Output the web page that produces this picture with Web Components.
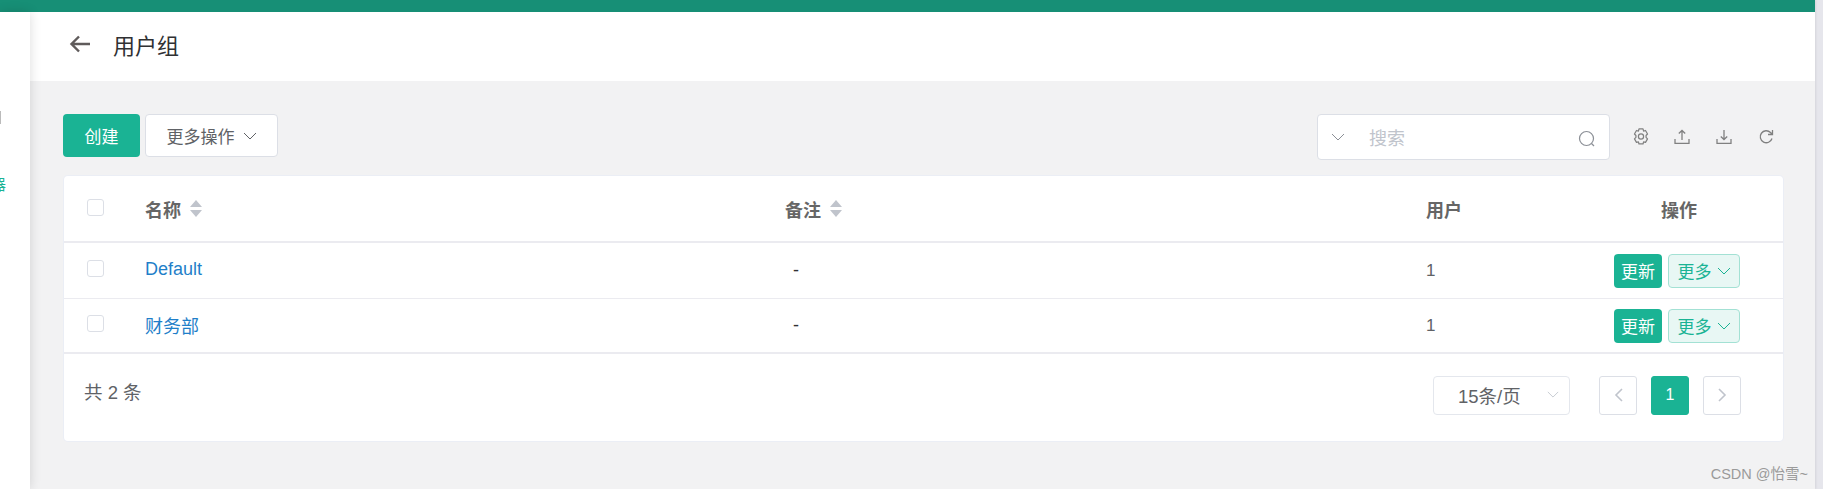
<!DOCTYPE html>
<html lang="zh">
<head>
<meta charset="utf-8">
<title>用户组</title>
<style>
  html, body { margin: 0; height: 100%; overflow: hidden; }
  body { font-family: "Liberation Sans", "Noto Sans CJK SC", sans-serif; font-size: 17px; color: #606266; }
</style>
</head>
<body>
<ug-shell>
  <ug-header title-text="用户组"></ug-header>
  <ug-toolbar></ug-toolbar>
  <ug-table>
    <ug-row name="Default" note="-" users="1"></ug-row>
    <ug-row name="财务部" note="-" users="1"></ug-row>
    <ug-pager slot="footer" total="2"></ug-pager>
  </ug-table>
</ug-shell>

<script>
(function() {
  const chevron = `<svg width="14" height="8" viewBox="0 0 14 8" fill="none" stroke="currentColor" stroke-width="1"><path d="M1 1l6 6 6-6"/></svg>`;

  // outer frame: green bar, clipped side menu, content column, scrollbar strip
  class UgShell extends HTMLElement {
    constructor() {
      super();
      this.attachShadow({ mode: "open" }).innerHTML = `
        <style>
          :host { display: flex; height: 489px; background: #e6e6ec; position: relative; }
          .page { flex: 1; min-width: 0; display: flex; flex-direction: column; background: #f2f2f3; margin-right: 8px; box-shadow: 1px 0 2px rgba(0,0,0,.08); }
          .bar { height: 12px; flex: none; background: #178f76; }
          .main { flex: 1; display: flex; min-height: 0; }
          .side { width: 30px; flex: none; background: #fff; box-shadow: 0 0 12px rgba(0,0,0,.14); z-index: 1; overflow: hidden; padding-top: 97px; box-sizing: border-box; }
          .tick { width: 1px; height: 13px; background: #bbb; margin-top: 2px; }
          .glyph { display: block; margin: 53px 0 0 -9px; color: #1ab394; font-size: 15px; line-height: 16px; }
          .content { flex: 1; min-width: 0; display: flex; flex-direction: column; }
          .mark { position: absolute; right: 15px; bottom: 6px; font-size: 14.500px; line-height: 18px; color: #9a9a9a; }
        </style>
        <div class="page">
          <div class="bar"></div>
          <div class="main">
            <div class="side"><div class="tick"></div><span class="glyph">器</span></div>
            <div class="content"><slot></slot></div>
          </div>
        </div>
        <div class="mark">CSDN @怡雪~</div>
      `;
    }
  }

  class UgHeader extends HTMLElement {
    constructor() {
      super();
      this.attachShadow({ mode: "open" }).innerHTML = `
        <style>
          :host { display: flex; align-items: center; height: 69px; flex: none; background: #fff; padding: 0 0 5px 39px; box-sizing: border-box; }
          svg { margin-right: 22px; }
          span { font-size: 22px; color: #303133; }
        </style>
        <svg width="22" height="18" viewBox="0 0 22 18" fill="none" stroke="#5f5b5b" stroke-width="2.400"><path d="M21 9H2.500M10 1.500L2.500 9l7.500 7.500"/></svg>
        <span></span>
      `;
    }
    connectedCallback() {
      this.shadowRoot.querySelector("span").textContent = this.getAttribute("title-text");
    }
  }

  class UgToolbar extends HTMLElement {
    constructor() {
      super();
      this.attachShadow({ mode: "open" }).innerHTML = `
        <style>
          :host { display: flex; align-items: flex-start; flex: none; padding: 33px 41px 0 33px; height: 95px; box-sizing: border-box; }
          button { font: inherit; font-size: 17px; height: 43px; border-radius: 4px; box-sizing: border-box; padding: 0; }
          .create { width: 77px; background: #1ab394; border: 0; color: #fff; }
          .more { width: 133px; margin-left: 5px; background: #fff; border: 1px solid #dcdfe6; color: #606266; display: flex; align-items: center; justify-content: center; gap: 8px; }
          .search { margin-left: auto; width: 293px; height: 46px; box-sizing: border-box; background: #fff; border: 1px solid #dcdfe6; border-radius: 4px; display: flex; align-items: center; padding: 0 13px 0 13px; color: #8b8f96; }
          .search span { font-size: 18px; color: #c0c4cc; margin-left: 24px; flex: 1; }
          .search .lens { margin-top: 3px; }
          .tools { display: flex; gap: 26px; margin-left: 22px; margin-top: 14px; color: #808080; align-items: center; }
          .tools svg { display: block; }
          .tools .gear { margin-right: -2px; }
        </style>
        <button class="create">创建</button>
        <button class="more">更多操作 ${chevron}</button>
        <div class="search">
          ${chevron}
          <span>搜索</span>
          <svg class="lens" width="18" height="18" viewBox="0 0 18 18" fill="none" stroke="currentColor" stroke-width="1.200"><circle cx="8.500" cy="8.500" r="7"/><path d="M13.500 13.500L16 16"/></svg>
        </div>
        <div class="tools">
          <svg class="gear" width="18" height="18" viewBox="0 0 16 16" fill="none" stroke="currentColor" stroke-width="1.100" stroke-linejoin="round"><path d="M6.200.8h3.600l.5 1.900 1.700-.5 1.800 3.100-1.300 1.400v1.600l1.300 1.400-1.800 3.100-1.700-.5-.5 1.900H6.200l-.5-1.900-1.700.5-1.800-3.100 1.300-1.400V6.700L2.200 5.300 4 2.200l1.700.5z"/><circle cx="8" cy="7.500" r="2.300"/></svg>
          <svg width="16" height="16" viewBox="0 0 16 16" fill="none" stroke="currentColor" stroke-width="1.300"><path d="M1 10v4.300h14V10M8 11V1.500M4.800 4.500L8 1.500l3.200 3"/></svg>
          <svg width="16" height="16" viewBox="0 0 16 16" fill="none" stroke="currentColor" stroke-width="1.300"><path d="M1 10v4.300h14V10M8 1v9.500M4.800 7.500L8 10.500l3.200-3"/></svg>
          <svg width="16" height="16" viewBox="0 0 16 16" fill="none" stroke="currentColor" stroke-width="1.300"><path d="M14 9.500A6 6 0 1 1 12.500 3.500L14.500 5.500M14.500 1v4.500H10"/></svg>
        </div>
      `;
    }
  }

  const rowStyle = `
    .grid { display: grid; grid-template-columns: 81px 640px 641px 156px 194px 1fr; align-items: center; }
    .box { width: 17px; height: 17px; margin-left: 23px; box-sizing: border-box; border: 1px solid #dcdfe6; border-radius: 3px; background: #fff; }
  `;

  class UgTable extends HTMLElement {
    constructor() {
      super();
      this.attachShadow({ mode: "open" }).innerHTML = `
        <style>
          :host { display: block; margin: 0 32px 0 34px; background: #fff; border-radius: 4px; box-shadow: 0 0 0 1px #ebeef5; height: 265px; }
          ${rowStyle}
          .head { height: 65px; border-bottom: 2px solid #ebebf0; color: #666; font-weight: bold; font-size: 18px; }
          .head .box { margin-top: -3px; }
          .title { display: flex; align-items: center; gap: 9px; }
          .sort { display: flex; flex-direction: column; gap: 3px; }
          .sort i { display: block; width: 0; border: 6px solid transparent; border-top: 0; border-bottom: 7px solid #c0c4cc; }
          .sort i + i { border-bottom: 0; border-top: 7px solid #c0c4cc; }
          .center { text-align: center; }
        </style>
        <div class="grid head">
          <div class="box"></div>
          <div class="title">名称<span class="sort"><i></i><i></i></span></div>
          <div class="title">备注<span class="sort"><i></i><i></i></span></div>
          <div>用户</div>
          <div class="center">操作</div>
          <div></div>
        </div>
        <slot></slot>
        <slot name="footer"></slot>
      `;
    }
  }

  class UgRow extends HTMLElement {
    constructor() {
      super();
      this.attachShadow({ mode: "open" }).innerHTML = `
        <style>
          :host { display: block; }
          ${rowStyle}
          .row { height: 56px; box-sizing: border-box; border-bottom: 1px solid #ebebf0; font-size: 18px; }
          :host(:last-of-type) .row { height: 55px; border-bottom: 2px solid #ebebf0; }
          .box { margin-top: -4px; }
          .name { color: #1f7fc9; margin-top: -2px; }
          .note { color: #303133; padding-left: 8px; }
          .users { color: #606266; font-size: 17px; }
          .ops { display: flex; justify-content: center; gap: 6px; padding-right: 4px; font-size: 17px; }
          .ops span { height: 34px; box-sizing: border-box; border-radius: 4px; display: flex; align-items: center; justify-content: center; }
          .upd { width: 48px; background: #1ab394; color: #fff; }
          .mor { width: 72px; gap: 5px; background: #e8f7f4; border: 1px solid #a3e1d4; color: #1ab394; }
        </style>
        <div class="grid row">
          <div class="box"></div>
          <div class="name"></div>
          <div class="note"></div>
          <div class="users"></div>
          <div class="ops"><span class="upd">更新</span><span class="mor">更多 ${chevron}</span></div>
          <div></div>
        </div>
      `;
    }
    connectedCallback() {
      this.shadowRoot.querySelector(".name").textContent = this.getAttribute("name");
      this.shadowRoot.querySelector(".note").textContent = this.getAttribute("note");
      this.shadowRoot.querySelector(".users").textContent = this.getAttribute("users");
    }
  }

  class UgPager extends HTMLElement {
    constructor() {
      super();
      this.attachShadow({ mode: "open" }).innerHTML = `
        <style>
          :host { display: flex; align-items: center; height: 86px; padding: 0 42px 4px 20px; box-sizing: border-box; font-size: 18.500px; color: #606266; }
          .total { flex: 1; margin-top: -8px; }
          .size { width: 137px; height: 39px; box-sizing: border-box; border: 1px solid #e4e7ed; border-radius: 4px; display: flex; align-items: center; padding: 0 10px 0 24px; }
          .size span { flex: 1; }
          .size svg { color: #c0c4cc; margin-top: -2px; }
          .page { width: 38px; height: 39px; box-sizing: border-box; border: 1px solid #dcdfe6; border-radius: 3px; display: flex; align-items: center; justify-content: center; margin-left: 14px; color: #c0c4cc; }
          .page.first { margin-left: 29px; }
          .page.on { background: #1ab394; border-color: #1ab394; color: #fff; font-size: 16px; }
        </style>
        <div class="total">共 <span id="t"></span> 条</div>
        <div class="size"><span>15条/页</span>${chevron.replace('width="14" height="8"', 'width="12" height="7"')}</div>
        <div class="page first"><svg width="9" height="14" viewBox="0 0 9 14" fill="none" stroke="currentColor" stroke-width="1.600"><path d="M8 1L2 7l6 6"/></svg></div>
        <div class="page on">1</div>
        <div class="page"><svg width="9" height="14" viewBox="0 0 9 14" fill="none" stroke="currentColor" stroke-width="1.600"><path d="M1 1l6 6-6 6"/></svg></div>
      `;
    }
    connectedCallback() {
      this.shadowRoot.querySelector("#t").textContent = this.getAttribute("total");
    }
  }

  window.customElements.define("ug-shell", UgShell);
  window.customElements.define("ug-header", UgHeader);
  window.customElements.define("ug-toolbar", UgToolbar);
  window.customElements.define("ug-table", UgTable);
  window.customElements.define("ug-row", UgRow);
  window.customElements.define("ug-pager", UgPager);
})();
</script>
</body>
</html>
